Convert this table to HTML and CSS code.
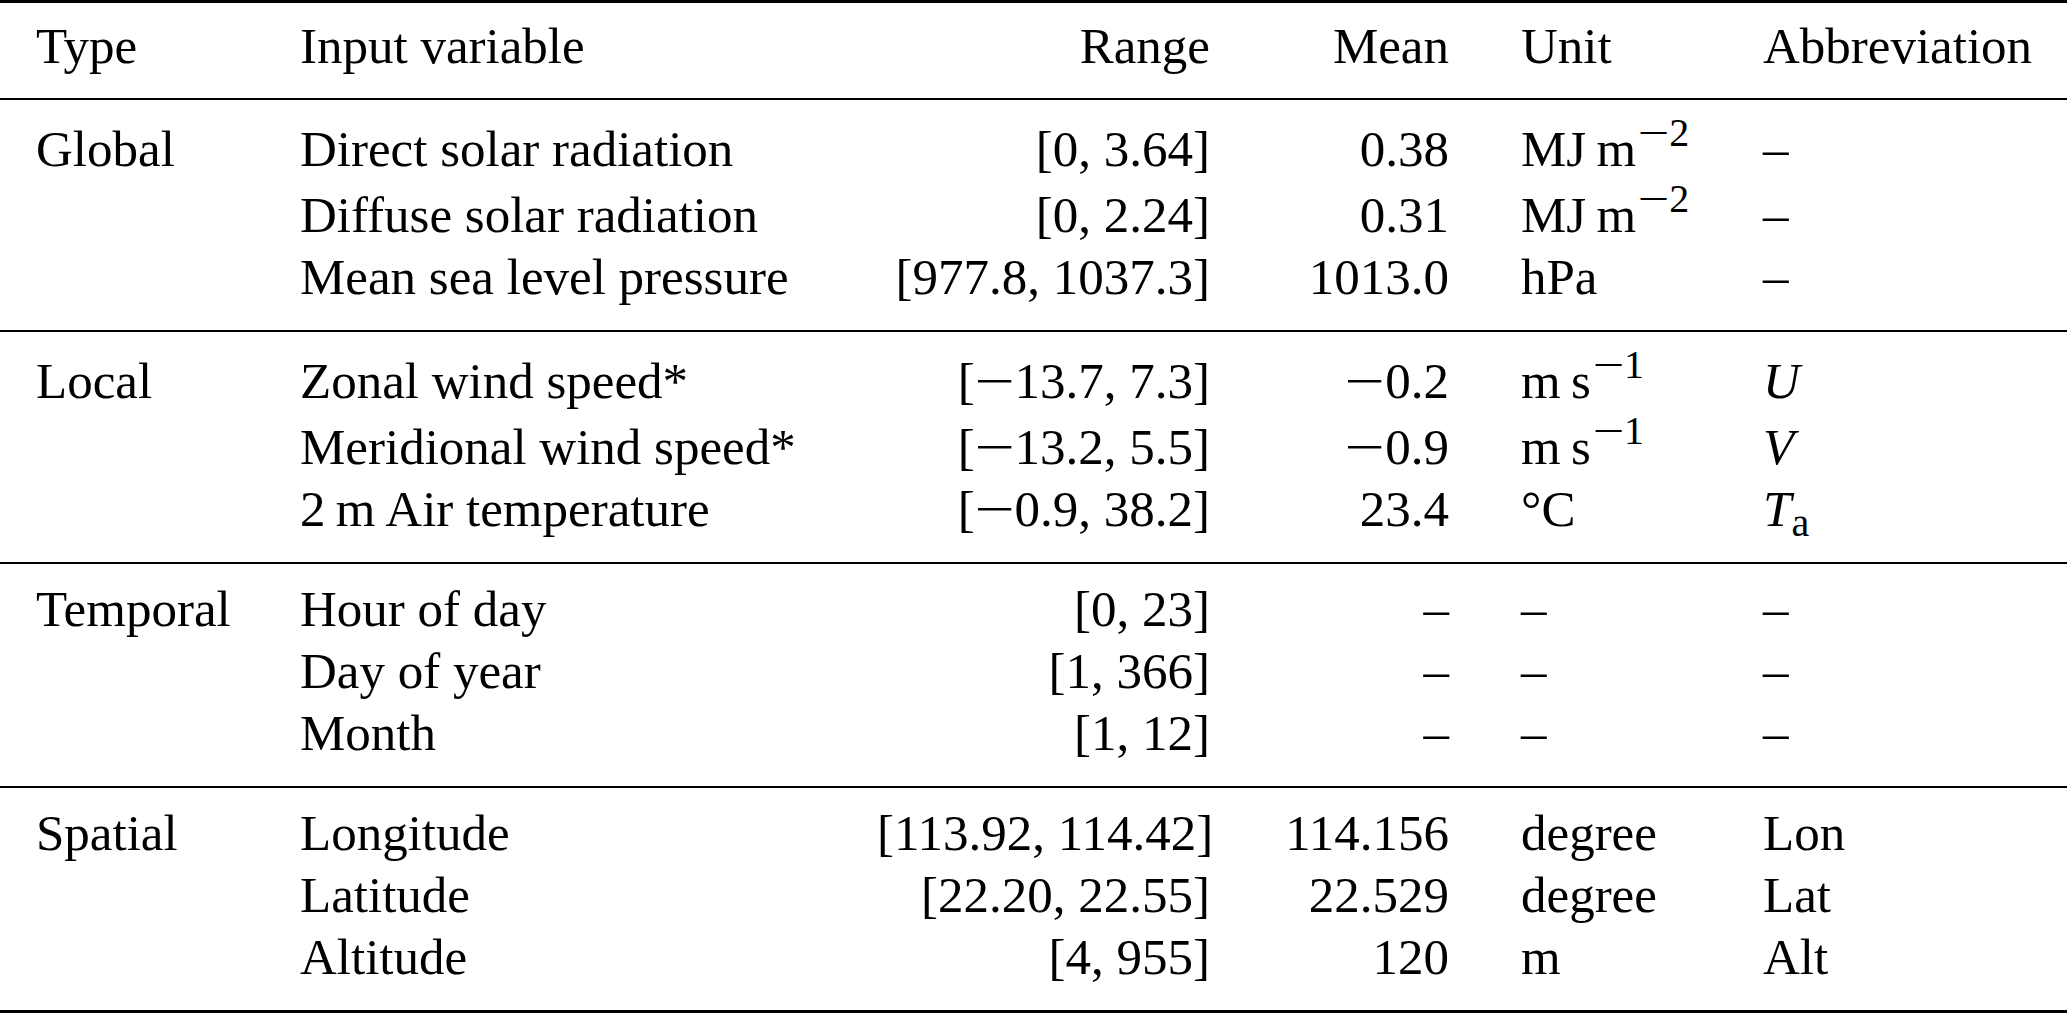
FILE: index.html
```html
<!DOCTYPE html>
<html lang="en">
<head>
<meta charset="utf-8">
<title>Input variables</title>
<link rel="stylesheet" href="styles.css">
</head>
<body>
<table class="vars">
  <colgroup>
    <col class="c-type">
    <col class="c-var">
    <col class="c-range">
    <col class="c-mean">
    <col class="c-unit">
    <col class="c-abbr">
  </colgroup>
  <thead>
    <tr>
      <th>Type</th>
      <th>Input variable</th>
      <th class="num">Range</th>
      <th class="num">Mean</th>
      <th>Unit</th>
      <th>Abbreviation</th>
    </tr>
  </thead>
  <tbody>
    <tr class="sec-start has-sup">
      <td>Global</td>
      <td>Direct solar radiation</td>
      <td class="num">[0, 3.64]</td>
      <td class="num">0.38</td>
      <td>MJ&#8201;m<sup><span class="neg">−</span>2</sup></td>
      <td>–</td>
    </tr>
    <tr class="has-sup">
      <td></td>
      <td>Diffuse solar radiation</td>
      <td class="num">[0, 2.24]</td>
      <td class="num">0.31</td>
      <td>MJ&#8201;m<sup><span class="neg">−</span>2</sup></td>
      <td>–</td>
    </tr>
    <tr class="sec-end">
      <td></td>
      <td>Mean sea level pressure</td>
      <td class="num">[977.8, 1037.3]</td>
      <td class="num">1013.0</td>
      <td>hPa</td>
      <td>–</td>
    </tr>
  </tbody>
  <tbody>
    <tr class="sec-start has-sup">
      <td>Local</td>
      <td>Zonal wind speed*</td>
      <td class="num">[<span class="neg">−</span>13.7, 7.3]</td>
      <td class="num"><span class="neg">−</span>0.2</td>
      <td>m&#8201;s<sup><span class="neg">−</span>1</sup></td>
      <td><i>U</i></td>
    </tr>
    <tr class="has-sup">
      <td></td>
      <td>Meridional wind speed*</td>
      <td class="num">[<span class="neg">−</span>13.2, 5.5]</td>
      <td class="num"><span class="neg">−</span>0.9</td>
      <td>m&#8201;s<sup><span class="neg">−</span>1</sup></td>
      <td><i>V</i></td>
    </tr>
    <tr class="sec-end">
      <td></td>
      <td>2&#8201;m Air temperature</td>
      <td class="num">[<span class="neg">−</span>0.9, 38.2]</td>
      <td class="num">23.4</td>
      <td>°C</td>
      <td><i>T</i><sub>a</sub></td>
    </tr>
  </tbody>
  <tbody>
    <tr class="sec-start">
      <td>Temporal</td>
      <td>Hour of day</td>
      <td class="num">[0, 23]</td>
      <td class="num">–</td>
      <td>–</td>
      <td>–</td>
    </tr>
    <tr>
      <td></td>
      <td>Day of year</td>
      <td class="num">[1, 366]</td>
      <td class="num">–</td>
      <td>–</td>
      <td>–</td>
    </tr>
    <tr class="sec-end">
      <td></td>
      <td>Month</td>
      <td class="num">[1, 12]</td>
      <td class="num">–</td>
      <td>–</td>
      <td>–</td>
    </tr>
  </tbody>
  <tbody class="last">
    <tr class="sec-start">
      <td>Spatial</td>
      <td>Longitude</td>
      <td class="num">[113.92, 114.42]</td>
      <td class="num">114.156</td>
      <td>degree</td>
      <td>Lon</td>
    </tr>
    <tr>
      <td></td>
      <td>Latitude</td>
      <td class="num">[22.20, 22.55]</td>
      <td class="num">22.529</td>
      <td>degree</td>
      <td>Lat</td>
    </tr>
    <tr class="sec-end">
      <td></td>
      <td>Altitude</td>
      <td class="num">[4, 955]</td>
      <td class="num">120</td>
      <td>m</td>
      <td>Alt</td>
    </tr>
  </tbody>
</table>
</body>
</html>
```

FILE: styles.css
```css
html, body {
  margin: 0;
  padding: 0;
  background: #fff;
}

body {
  font-family: "Liberation Serif", "Times New Roman", serif;
  font-size: 51px;
  color: #000;
}

.vars {
  width: 2067px;
  table-layout: fixed;
  border-collapse: separate;
  border-spacing: 0;
}

.c-type  { width: 264px; }
.c-var   { width: 577px; }
.c-range { width: 405px; }
.c-mean  { width: 239px; }
.c-unit  { width: 242px; }
.c-abbr  { width: 340px; }

.vars th,
.vars td {
  padding: 0 36px;
  line-height: 62px;
  height: 62px;
  text-align: left;
  font-weight: normal;
  white-space: nowrap;
  vertical-align: baseline;
}

.vars th {
  border-top: 3px solid #000;
  padding-top: 12px;
  padding-bottom: 21px;
}

.vars .num {
  text-align: right;
}

.vars tr.has-sup td {
  padding-top: 4px;
}

.vars tr.sec-start td {
  border-top: 2px solid #000;
  padding-top: 14px;
}

.vars tr.sec-start.has-sup td {
  padding-top: 18px;
}

.vars tr.sec-end td {
  padding-bottom: 22px;
}

.vars tbody.last tr.sec-end td {
  border-bottom: 3px solid #000;
}

/* math minus: wider than the text glyph, as in TeX */
.neg {
  display: inline-block;
  width: 0.78em;
  text-align: center;
  transform: scaleX(1.4);
}

.vars sup {
  font-size: 40px;
  line-height: 0;
  vertical-align: 20px;
  margin-left: 2px;
}

.vars sub {
  font-size: 40px;
  line-height: 0;
  vertical-align: -10px;
}

.vars i {
  font-style: italic;
}
```
